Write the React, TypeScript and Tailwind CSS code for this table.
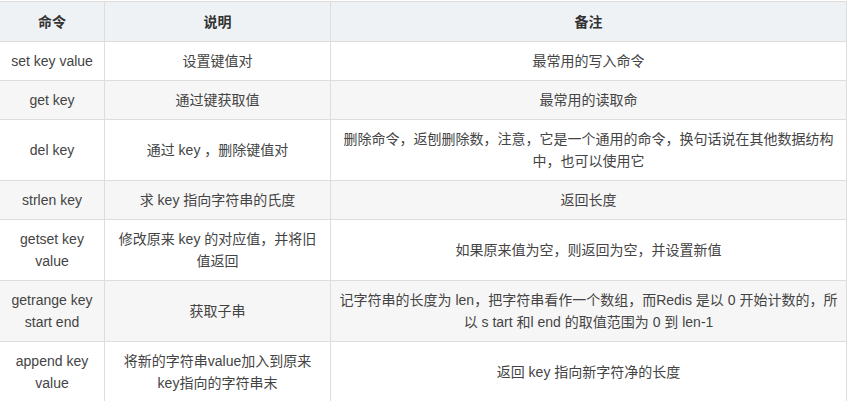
const rows: { cmd: string[]; desc: string[]; note: string[] }[] = [
  { cmd: ["set key value"], desc: ["设置键值对"], note: ["最常用的写入命令"] },
  { cmd: ["get key"], desc: ["通过键获取值"], note: ["最常用的读取命"] },
  {
    cmd: ["del key"],
    desc: ["通过 key ，删除键值对"],
    note: ["删除命令，返刨删除数，注意，它是一个通用的命令，换句话说在其他数据纺构", "中，也可以使用它"],
  },
  { cmd: ["strlen key"], desc: ["求 key 指向字符串的氏度"], note: ["返回长度"] },
  {
    cmd: ["getset key", "value"],
    desc: ["修改原来 key 的对应值，并将旧", "值返回"],
    note: ["如果原来值为空，则返回为空，并设置新值"],
  },
  {
    cmd: ["getrange key", "start end"],
    desc: ["获取子串"],
    note: ["记字符串的长度为 len，把字符串看作一个数组，而Redis 是以 0 开始计数的，所", "以 s tart 和l end 的取值范围为 0 到 len-1"],
  },
  {
    cmd: ["append key", "value"],
    desc: ["将新的字符串value加入到原来", "key指向的字符串末"],
    note: ["返回 key 指向新字符净的长度"],
  },
];

function Cell({ lines, last }: { lines: string[]; last?: boolean }) {
  return (
    <div
      className={`flex flex-col items-center justify-center border-b border-[#dddddd] px-2 py-2 text-center ${
        last ? "" : "border-r"
      }`}
    >
      {lines.map((l) => (
        <span key={l} className="whitespace-nowrap">
          {l}
        </span>
      ))}
    </div>
  );
}

export default function App() {
  return (
    <div
      className="h-[401px] w-[854px] overflow-hidden bg-white pt-px text-[14px] leading-[22px] text-[#444]"
      style={{ fontFamily: '"Liberation Sans", "Noto Sans CJK SC", sans-serif' }}
    >
      <div className="w-[847px] border-t border-r border-[#dddddd]">
        {/* header */}
        <div className="grid grid-cols-[105px_226px_1fr] bg-[#eff2f5] font-bold text-[#333]">
          <div className="flex h-10 items-center justify-center border-r border-b border-[#dddddd]">命令</div>
          <div className="flex h-10 items-center justify-center border-r border-b border-[#dddddd]">说明</div>
          <div className="flex h-10 items-center justify-center border-b border-[#dddddd]">备注</div>
        </div>
        {rows.map((r, i) => (
          <div
            key={r.cmd.join(" ")}
            className={`grid grid-cols-[105px_226px_1fr] ${i % 2 === 1 ? "bg-[#f6f6f6]" : "bg-white"}`}
          >
            <Cell lines={r.cmd} />
            <Cell lines={r.desc} />
            <Cell lines={r.note} last />
          </div>
        ))}
      </div>
    </div>
  );
}
